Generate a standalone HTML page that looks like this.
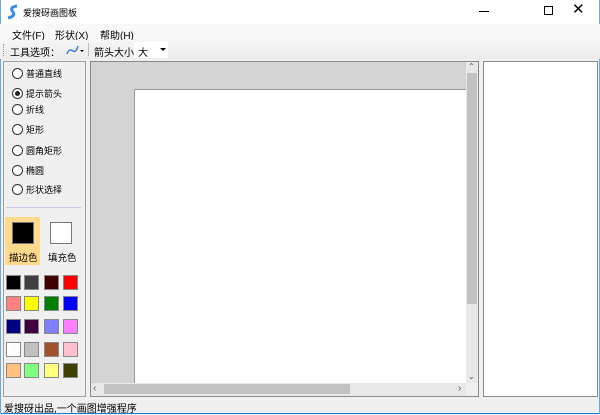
<!DOCTYPE html>
<html><head><meta charset="utf-8"><style>
*{margin:0;padding:0;box-sizing:border-box}
body{width:600px;height:414px;background:#f0f0f0;font-family:"Liberation Sans","Noto Sans CJK SC",sans-serif;font-size:10px;color:#000;position:relative;overflow:hidden}
.a{position:absolute;white-space:nowrap}
.sw{position:absolute;width:15px;height:15px;border:1px solid #888}
.rb{position:absolute;left:12px;width:11px;height:11px;border:1px solid #333;border-radius:50%;background:#fff}
.rl{position:absolute;left:26px;font-size:9px}
</style></head><body>
<div class="a" style="left:0;top:0;width:600px;height:24px;background:#fff"></div>
<div class="a" style="left:0;top:413px;width:600px;height:1px;background:#1a7bd0"></div>
<div class="a" style="left:0;top:0;width:1px;height:414px;background:#6aa8de"></div>
<div class="a" style="right:0;top:0;width:1px;height:414px;background:#6aa8de"></div>
<svg class="a" style="left:5px;top:4px" width="16" height="16"><path d="M12 2 Q4 3 8 8 Q11 12 3 14" stroke="#3a8ee6" stroke-width="3" fill="none"/></svg>
<div class="a" style="left:23px;top:6px;font-size:9px">爱搜砑画图板</div>
<div class="a" style="left:479px;top:11px;width:10px;height:1px;background:#000"></div>
<div class="a" style="left:544px;top:6px;width:9px;height:9px;border:1px solid #000"></div>
<div class="a" style="left:572px;top:0px;font-size:15px;font-weight:300">✕</div>
<div class="a" style="left:0;top:24px;width:600px;height:16px;background:#f8f8f8"></div>
<div class="a" style="left:12px;top:27px">文件(F)</div>
<div class="a" style="left:55px;top:27px">形状(X)</div>
<div class="a" style="left:100px;top:27px">帮助(H)</div>
<div class="a" style="left:0;top:40px;width:600px;height:19px;background:linear-gradient(#f6f6f6,#ececec)"></div>
<div class="a" style="left:3px;top:44px;width:1px;height:12px;border-left:1px dotted #999"></div>
<div class="a" style="left:10px;top:44px">工具选项：</div>
<svg class="a" style="left:65px;top:43px" width="20" height="14"><path d="M2 11 Q4 5 8 8 Q11 10 13 3" stroke="#3a7fd0" stroke-width="1.5" fill="none"/><path d="M15 7 l4 0 l-2 2z" fill="#000"/></svg>
<div class="a" style="left:88px;top:43px;width:1px;height:13px;background:#bbb"></div>
<div class="a" style="left:94px;top:44px">箭头大小</div>
<div class="a" style="left:134px;top:42px;width:34px;height:16px;background:#fff"></div>
<div class="a" style="left:138px;top:44px">大</div>
<div class="a" style="left:160px;top:48px;border:3px solid transparent;border-top:3px solid #000"></div>
<!-- left panel -->
<div class="a" style="left:3px;top:61px;width:83px;height:336px;border:1px solid #a0a0a0;background:#f0f0f0"></div>
<div class="rb" style="top:68px"></div><div class="rl" style="top:67px">普通直线</div>
<div class="rb" style="top:88px"></div><div class="a" style="left:15px;top:91px;width:5px;height:5px;border-radius:50%;background:#222"></div><div class="rl" style="top:87px">提示箭头</div>
<div class="rb" style="top:104px"></div><div class="rl" style="top:103px">折线</div>
<div class="rb" style="top:124px"></div><div class="rl" style="top:123px">矩形</div>
<div class="rb" style="top:145px"></div><div class="rl" style="top:144px">圆角矩形</div>
<div class="rb" style="top:165px"></div><div class="rl" style="top:164px">椭圆</div>
<div class="rb" style="top:184px"></div><div class="rl" style="top:183px">形状选择</div>
<div class="a" style="left:6px;top:207px;width:75px;height:1px;background:#c8c8e8"></div>
<div class="a" style="left:5px;top:217px;width:35px;height:48px;background:#ffd98c"></div>
<div class="a" style="left:12px;top:222px;width:22px;height:22px;background:#000;border:1px solid #777"></div>
<div class="a" style="left:50px;top:222px;width:22px;height:22px;background:#fff;border:1px solid #777"></div>
<div class="a" style="left:9px;top:250px;font-size:9.5px">描边色</div>
<div class="a" style="left:48px;top:250px;font-size:9.5px">填充色</div>
<div class="sw" style="left:6px;top:275px;background:#000"></div>
<div class="sw" style="left:24px;top:275px;background:#404040"></div>
<div class="sw" style="left:44px;top:275px;background:#400000"></div>
<div class="sw" style="left:63px;top:275px;background:#ff0000"></div>
<div class="sw" style="left:6px;top:296px;background:#ff8080"></div>
<div class="sw" style="left:24px;top:296px;background:#ffff00"></div>
<div class="sw" style="left:44px;top:296px;background:#008000"></div>
<div class="sw" style="left:63px;top:296px;background:#0000ff"></div>
<div class="sw" style="left:6px;top:319px;background:#000080"></div>
<div class="sw" style="left:24px;top:319px;background:#400040"></div>
<div class="sw" style="left:44px;top:319px;background:#8080ff"></div>
<div class="sw" style="left:63px;top:319px;background:#ff80ff"></div>
<div class="sw" style="left:6px;top:342px;background:#fff"></div>
<div class="sw" style="left:24px;top:342px;background:#c0c0c0"></div>
<div class="sw" style="left:44px;top:342px;background:#a0522d"></div>
<div class="sw" style="left:63px;top:342px;background:#ffc0cb"></div>
<div class="sw" style="left:6px;top:363px;background:#ffc080"></div>
<div class="sw" style="left:24px;top:363px;background:#80ff80"></div>
<div class="sw" style="left:44px;top:363px;background:#ffff80"></div>
<div class="sw" style="left:63px;top:363px;background:#404000"></div>
<!-- canvas -->
<div class="a" style="left:90px;top:61px;width:389px;height:336px;border:1px solid #8a8a8a;background:#d4d4d4"></div>
<div class="a" style="left:134px;top:89px;width:332px;height:294px;background:#fff;border-left:1px solid #999;border-top:1px solid #999"></div>
<div class="a" style="left:466px;top:62px;width:12px;height:321px;background:#e8e8e8"></div>
<div class="a" style="left:467px;top:73px;width:10px;height:231px;background:#c2c2c2"></div>
<div class="a" style="left:468px;top:62px;font-size:8px;color:#555">⌃</div>
<div class="a" style="left:468px;top:372px;font-size:8px;color:#555">⌄</div>
<div class="a" style="left:91px;top:383px;width:375px;height:13px;background:#e8e8e8"></div>
<div class="a" style="left:104px;top:384px;width:246px;height:10px;background:#c2c2c2"></div>
<div class="a" style="left:93px;top:383px;font-size:10px;color:#555">‹</div>
<div class="a" style="left:458px;top:383px;font-size:10px;color:#555">›</div>
<div class="a" style="left:466px;top:383px;width:12px;height:13px;background:#f0f0f0"></div>
<!-- right -->
<div class="a" style="left:483px;top:61px;width:115px;height:336px;border:1px solid #8a8a8a;background:#fff"></div>
<div class="a" style="left:4px;top:400px;font-size:10px">爱搜砑出品,一个画图增强程序</div>
</body></html>
